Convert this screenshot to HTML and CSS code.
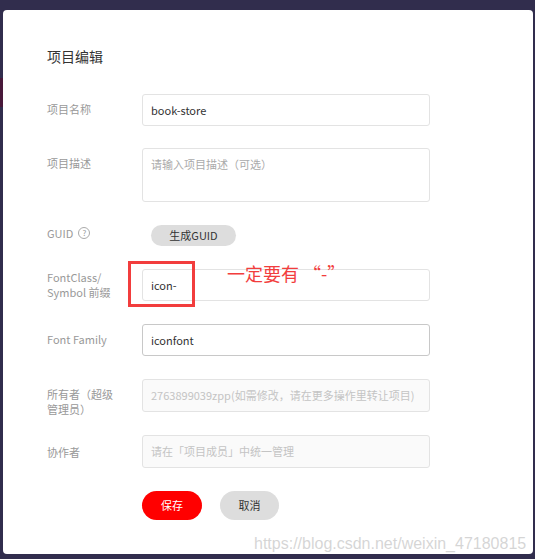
FILE: index.html
```html
<!DOCTYPE html>
<html lang="zh-CN">
<head>
<meta charset="utf-8">
<title>项目编辑</title>
<link rel="stylesheet" href="styles.css">
</head>
<body>
<div class="modal">
  <h2 class="title">项目编辑</h2>
  <div class="form">
    <div class="label">项目名称</div>
    <div class="field">book-store</div>

    <div class="label label-desc">项目描述</div>
    <div class="field area placeholder">请输入项目描述（可选）</div>

    <div class="label label-guid">GUID <span class="help">?</span></div>
    <div class="guid-cell"><span class="btn-guid">生成GUID</span></div>

    <div class="label label-two">FontClass/<br>Symbol 前缀</div>
    <div class="field annotated">icon-
      <span class="mark-box"></span>
      <span class="mark-text">一定要有 “-”</span>
    </div>

    <div class="label label-ff">Font Family</div>
    <div class="field focus">iconfont</div>

    <div class="label label-owner">所有者（超级<br>管理员）</div>
    <div class="field disabled">2763899039zpp(如需修改，请在更多操作里转让项目)</div>

    <div class="label label-collab">协作者</div>
    <div class="field disabled">请在「项目成员」中统一管理</div>

    <div></div>
    <div class="actions">
      <span class="btn btn-save">保存</span>
      <span class="btn btn-cancel">取消</span>
    </div>
  </div>
  <div class="watermark">https://blog.csdn.net/weixin_47180815</div>
</div>
</body>
</html>
```
FILE: styles.css
```css
html, body {
  margin: 0;
  padding: 0;
}
body {
  width: 535px;
  height: 559px;
  overflow: hidden;
  background-color: #312d4d;
  background-image: linear-gradient(#48183a, #48183a);
  background-repeat: no-repeat;
  background-position: 0 78px;
  background-size: 3px 29px;
  font-family: "Noto Sans CJK SC", "Noto Sans", sans-serif;
  font-size: 11px;
  color: #333;
  padding-top: 10px;
  box-sizing: border-box;
}
.modal {
  position: relative;
  margin-left: 3px;
  width: 530px;
  height: 544px;
  background: #fff;
  border-radius: 4px;
  padding: 36px 0 0 44px;
  box-sizing: border-box;
}
.title {
  margin: 0;
  font-size: 14px;
  line-height: 20px;
  font-weight: normal;
  color: #333;
}
.form {
  margin-top: 28px;
  display: grid;
  grid-template-columns: 95px 288px;
  grid-template-rows: 31px 54px 21px 32px 32px 33px 33px 29px;
  row-gap: 23px;
}
.label {
  color: #999;
  font-size: 11px;
  line-height: 16px;
  padding-top: 7px;
  box-sizing: border-box;
}
.label-desc { padding-top: 7px; }
.label-guid { padding-top: 0; display: flex; align-items: center; height: 16px; }
.label-two { padding-top: 1px; height: 32px; line-height: 15px; }
.label-ff { padding-top: 7px; }
.label-owner { padding-top: 8px; height: 33px; line-height: 15px; }
.label-collab { padding-top: 9px; }
.help {
  display: inline-flex;
  align-items: center;
  justify-content: center;
  width: 10px;
  height: 10px;
  margin-left: 5px;
  border: 1px solid #aaa;
  border-radius: 50%;
  font-size: 8px;
  line-height: 10px;
  color: #999;
}
.field {
  position: relative;
  height: 32px;
  box-sizing: border-box;
  border: 1px solid #e3e3e3;
  border-radius: 3px;
  padding: 0 8px;
  line-height: 30px;
  color: #333;
  white-space: nowrap;
}
.area {
  height: 54px;
  line-height: 16px;
  padding-top: 7px;
}
.placeholder { color: #aaa; }
.focus { border-color: #c8c8c8; }
.disabled {
  height: 33px;
  line-height: 31px;
  background: #fafafa;
  color: #c4c4c4;
}
.guid-cell {
  padding-left: 9px;
  height: 21px;
}
.btn-guid {
  display: inline-block;
  width: 85px;
  height: 21px;
  line-height: 21px;
  border-radius: 11px;
  background: #dddddd;
  text-align: center;
  color: #333;
}
.mark-box {
  position: absolute;
  left: -15px;
  top: -9px;
  width: 67px;
  height: 46px;
  box-sizing: border-box;
  border: 3px solid #f23d3d;
}
.mark-text {
  position: absolute;
  left: 84px;
  top: -8px;
  font-size: 18px;
  line-height: 22px;
  color: #f23d3d;
}
.actions {
  display: flex;
  gap: 18px;
}
.btn {
  display: inline-block;
  height: 29px;
  line-height: 29px;
  border-radius: 15px;
  text-align: center;
  font-size: 11px;
}
.btn-save {
  width: 60px;
  background: #ff0000;
  color: #fff;
}
.btn-cancel {
  width: 59px;
  background: #dddddd;
  color: #333;
}
.watermark {
  position: absolute;
  left: 251px;
  top: 524px;
  font-family: "Liberation Sans", Arial, sans-serif;
  font-size: 16px;
  line-height: 20px;
  color: rgba(200, 200, 200, 0.75);
  white-space: nowrap;
}
```
